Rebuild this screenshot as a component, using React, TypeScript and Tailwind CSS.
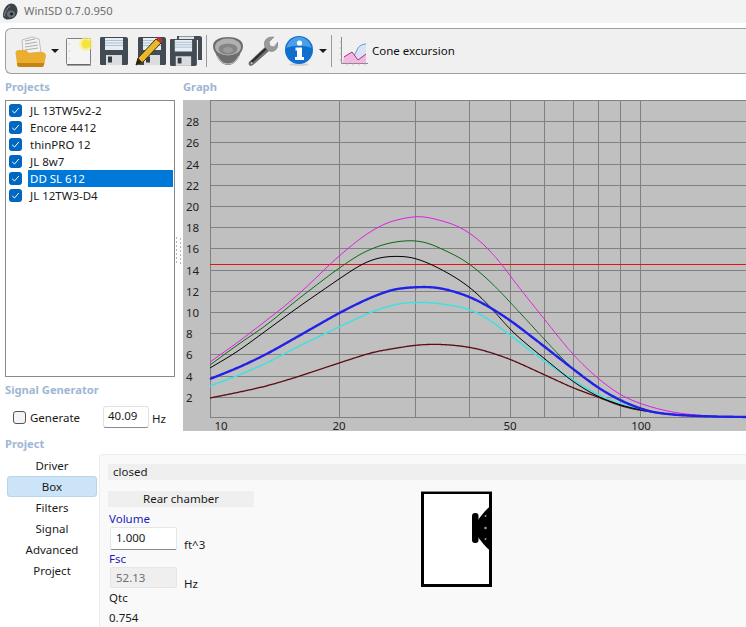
const font = "font-['Noto_Sans',sans-serif]"

const projects = ["JL 13TW5v2-2", "Encore 4412", "thinPRO 12", "JL 8w7", "DD SL 612", "JL 12TW3-D4"]
const navItems = ["Driver", "Box", "Filters", "Signal", "Advanced", "Project"]

// curve samples read off the plot, in picture coordinates (svg starts at 183,100)
type Pt = [number, number]
const tail: Pt[] = [[650, 412], [676, 415], [711, 416.5], [746, 417]]
const curves: { color: string; width: number; pts: Pt[] }[] = [
  {
    color: "#5c0a14",
    width: 1.3,
    pts: [[210, 398], [240, 392], [267, 386], [297, 377], [339, 363], [373, 352], [415, 345], [437, 344], [463, 346], [483, 350], [510, 359], [545, 375], [573, 388], [598, 397], [623, 407], ...tail]
  },
  {
    color: "#40e0e0",
    width: 1.5,
    pts: [[210, 386], [237, 376], [267, 363], [297, 347], [339, 327], [373, 311], [400, 303], [427, 302], [463, 307], [483, 315], [510, 335], [545, 362], [573, 380], [598, 395], [620, 404], ...tail]
  },
  {
    color: "#e020e0",
    width: 1,
    pts: [[210, 362], [237, 343], [263, 323], [290, 302], [314, 280], [330, 264], [339, 256], [363, 236], [387, 222], [415, 216], [423, 216], [447, 222], [463, 228], [483, 243], [502, 264], [513, 280], [545, 320], [573, 355], [598, 379], [623, 397], [650, 407], [676, 413], [711, 416.5], [746, 417]]
  },
  {
    color: "#0a6a14",
    width: 1,
    pts: [[210, 365], [240, 343], [267, 325], [293, 303], [327, 277], [339, 268], [363, 252], [387, 243], [410, 240], [427, 242], [463, 259], [471, 265], [489, 280], [510, 302], [545, 340], [573, 370], [598, 388], [623, 402], ...tail]
  },
  {
    color: "#000000",
    width: 1,
    pts: [[210, 368], [237, 352], [267, 330], [297, 308], [339, 279], [363, 263], [380, 257], [397, 256], [413, 257], [433, 265], [457, 278], [476, 292], [496, 313], [510, 330], [530, 347], [545, 359], [573, 382], [598, 397], [623, 406], ...tail]
  },
  {
    color: "#2222e6",
    width: 2.4,
    pts: [[210, 379], [240, 367], [267, 354], [297, 337], [339, 313], [367, 299], [393, 289], [415, 287], [437, 287], [463, 294], [483, 303], [510, 320], [545, 347], [573, 369], [598, 388], [623, 402], ...tail]
  }
]

// sample every pixel, then run a moving average twice to take the lumps out of the hand read points
const smooth = (pts: Pt[]) => {
  const at = (x: number) => {
    if (x <= pts[0][0]) {
      const [a, b] = pts
      return a[1] + ((x - a[0]) * (b[1] - a[1])) / (b[0] - a[0])
    }
    if (x >= pts[pts.length - 1][0]) return pts[pts.length - 1][1]
    const i = pts.findIndex((p) => p[0] >= x)
    const [a, b] = [pts[i - 1], pts[i]]
    return a[1] + ((x - a[0]) * (b[1] - a[1])) / (b[0] - a[0])
  }
  const pad = 40
  let ys: number[] = []
  for (let x = 210 - pad; x <= 746 + pad; x++) ys.push(at(x))
  for (let pass = 0; pass < 2; pass++) {
    ys = ys.map((_, i) => {
      const r = 9
      let sum = 0
      let n = 0
      for (let j = Math.max(i - r, 0); j <= Math.min(i + r, ys.length - 1); j++) {
        sum += ys[j]
        n++
      }
      return sum / n
    })
  }
  let d = ""
  for (let x = 210; x <= 746; x++) {
    d += `${x === 210 ? "M" : "L"}${x - 183} ${(ys[x - 210 + pad] - 100).toFixed(2)} `
  }
  return d
}

const Graph = () => {
  const vLines = [210.5, 339.5, 415.5, 469.5, 510.5, 544.5, 573.5, 598.5, 620.5, 640.5]
  const hLines: [number, string][] = [
    [121.5, "28"], [142.5, "26"], [164.5, "24"], [185.5, "22"], [206.5, "20"], [227.5, "18"], [248.5, "16"],
    [270.5, "14"], [291.5, "12"], [312.5, "10"], [333.5, "8"], [354.5, "6"], [376.5, "4"], [397.5, "2"]
  ]
  const xLabels: [number, string][] = [[221, "10"], [339, "20"], [510, "50"], [641, "100"]]
  return (
    <svg width="563" height="335" viewBox="0 0 563 335" className="block shrink-0">
      <rect x="0" y="0" width="563" height="331" fill="#c0c0c0" />
      <line x1="27.5" x2="563" y1="0.5" y2="0.5" stroke="#808080" />
      {hLines.map(([y]) => (
        <line key={y} x1="27" x2="563" y1={y - 100} y2={y - 100} stroke="#808080" />
      ))}
      {vLines.map((x) => (
        <line key={x} x1={x - 183} x2={x - 183} y1="0" y2="317.5" stroke="#808080" />
      ))}
      <line x1="27" x2="563" y1="317.5" y2="317.5" stroke="#808080" />
      <line x1="27" x2="563" y1="164.5" y2="164.5" stroke="#e81010" />
      {curves.map((c) => (
        <path key={c.color} d={smooth(c.pts)} fill="none" stroke={c.color} strokeWidth={c.width} />
      ))}
      {hLines.map(([y, label]) => (
        <text key={label} x="3" y={y - 96} fontSize="11.5" fontFamily="Noto Sans" fill="#222">
          {label}
        </text>
      ))}
      {xLabels.map(([x, label]) => (
        <text key={label} x={x - 183} y="330" textAnchor="middle" fontSize="11.5" fontFamily="Noto Sans" fill="#222">
          {label}
        </text>
      ))}
    </svg>
  )
}

const SpeakerLogo = () => (
  <svg width="16" height="17" viewBox="0 0 16 17" className="ml-[2px]">
    <path d="M9 0.5 C13 0.5 15.5 4 15.5 8 C15.5 13 11 16.5 6 16.5 C2 16.5 0.5 14 1 11 C1.5 7 4 1 9 0.5Z" fill="#3c434a" />
    <ellipse cx="9" cy="11" rx="4" ry="3.5" fill="#69717a" />
    <ellipse cx="9.5" cy="11" rx="1.6" ry="1.4" fill="#1b1f24" />
    <path d="M2 13 C3 9 5 5 8 3" stroke="#868d94" strokeWidth="1" fill="none" />
  </svg>
)

const Folder = () => (
  <svg width="32" height="31" viewBox="0 0 32 31" className="block">
    <path d="M7 4 L17 1 L24 3 L26 16 L8 18Z" fill="#f2f2f2" stroke="#a9a9a9" strokeWidth="0.7" />
    <path d="M10 5 L20 3 M10 8 L22 6 M10 11 L23 9 M10 14 L23 12" stroke="#9a9a9a" strokeWidth="0.8" />
    <path d="M0.5 17 C0.5 15 2 14 4 14 L11 14 L14 17 L27 16 C29 16 31 18 31 20 L29 29 C29 30 28 31 26 31 L5 31 C3 31 2 30 2 28Z" fill="#ecae30" />
    <path d="M2 27 L29.3 27 L28.5 30 C28 31 27 31 26 31 L5 31 C3 31 2 30 2 27Z" fill="#c58412" />
  </svg>
)

const Arrow = () => (
  <svg width="8" height="4" viewBox="0 0 8 4" className="block">
    <path d="M0 0 H8 L4 4Z" fill="#1a1a1a" />
  </svg>
)

const NewPage = () => (
  <svg width="27" height="29" viewBox="0 0 27 29" className="block">
    <rect x="0.5" y="1.5" width="24" height="26" rx="1" fill="#f4f4f4" stroke="#7f7f7f" />
    <path d="M1 28 H25" stroke="#555" strokeWidth="1" />
    <circle cx="3.5" cy="7" r="0.6" fill="#aaa" />
    <circle cx="3.5" cy="14" r="0.6" fill="#aaa" />
    <circle cx="3.5" cy="21" r="0.6" fill="#aaa" />
    <circle cx="20" cy="7" r="7" fill="#f7ef8c" opacity="0.7" />
    <circle cx="20" cy="7" r="4.5" fill="#f5e43a" />
  </svg>
)

const FloppyShape = () => (
  <>
    <path d="M1.5 0 H26 C27 0 28 1 28 2 V26.5 C28 27.5 27 28 26 28 H1.5 C0.5 28 0 27.5 0 26.5 V1.5 C0 0.5 0.5 0 1.5 0Z" fill="#424b54" />
    <rect x="5" y="1" width="18" height="12" fill="#e6edf3" />
    <path d="M5 3.5 H23 M5 6 H23 M5 8.5 H23" stroke="#9fb6cc" strokeWidth="0.8" />
    <rect x="6" y="18" width="16" height="10" fill="#d9dde0" />
    <rect x="8" y="19.5" width="4" height="6" fill="#353c44" />
  </>
)

const Floppy = () => (
  <svg width="28" height="28" viewBox="0 0 28 28" className="block">
    <FloppyShape />
  </svg>
)

const FloppyPencil = () => (
  <svg width="31" height="30" viewBox="0 0 31 30" className="block">
    <g transform="translate(3 1)">
      <FloppyShape />
    </g>
    <path d="M1 29 L3 22 L21 3 L26 7 L8 26Z" fill="#e8b92c" stroke="#3a2c05" strokeWidth="1" />
    <path d="M21 3 L23.5 1 C24.5 0.5 27 3 27.5 5 L26 7Z" fill="#c8322e" />
    <path d="M1 29 L3 22 L7 26Z" fill="#2a2209" />
  </svg>
)

const Floppies = () => (
  <svg width="32" height="30" viewBox="0 0 32 30" className="block">
    <path d="M7 0 H30 C31 0 32 1 32 2 V24 H28 V4 H7Z" fill="#424b54" />
    <rect x="9" y="0.5" width="15" height="3.5" fill="#dfe6ec" />
    <g transform="translate(0 3) scale(0.96)">
      <FloppyShape />
    </g>
  </svg>
)

const Bowl = () => (
  <svg width="32" height="30" viewBox="0 0 32 30" className="block">
    <path d="M1 10 C1 4 8 1 16 1 C24 1 31 4 31 10 C31 14 29 16 28 18 C26 25 21 29 16 29 C11 29 6 25 4 18 C3 16 1 14 1 10Z" fill="#6d6d6d" />
    <ellipse cx="16" cy="11" rx="13" ry="8.5" fill="#b0b0b0" />
    <ellipse cx="16" cy="13" rx="9.5" ry="5.5" fill="#858585" />
    <ellipse cx="16" cy="14" rx="5" ry="3" fill="#9b9b9b" />
    <path d="M5 20 C8 26 12 28 16 28 C20 28 24 26 27 20" stroke="#c0c0c0" strokeWidth="1.2" fill="none" />
  </svg>
)

const Wrench = () => (
  <svg width="30" height="31" viewBox="0 0 30 31" className="block">
    <path d="M3 30 C1 30 0 28 1 26 L17 11 L21 15 L5 29Z" fill="#6f6f6f" />
    <path d="M1.5 26.5 L17 12 L18.5 13.5 L3 28Z" fill="#2c2c2c" />
    <path d="M17 11 C15 6 18 1 24 1 L26 1 L21 6 L22 10 L26 11 L30 6 C30.5 12 27 17 21 15Z" fill="#9a9a9a" stroke="#6e6e6e" strokeWidth="0.5" />
    <circle cx="3.5" cy="27" r="1.1" fill="#d0d0d0" />
  </svg>
)

const Info = () => (
  <svg width="28" height="30" viewBox="0 0 28 30" className="block">
    <ellipse cx="14" cy="28.5" rx="10" ry="1.5" fill="#cfcfcf" />
    <circle cx="14" cy="14" r="14" fill="#0f6fce" />
    <path d="M1.5 12 C3 5 8 1 14 1 C20 1 25 5 26.5 12 C20 9 8 9 1.5 12Z" fill="#4d9ee8" />
    <circle cx="14.5" cy="7" r="2.6" fill="#fff" />
    <path d="M10.5 11.5 H17 V21 H19 V24 H10 V21 H12 V14.5 H10.5Z" fill="#fff" />
  </svg>
)

const ChartIcon = () => (
  <svg width="29" height="30" viewBox="0 0 29 30" className="block">
    <path d="M2.5 1 V27.5 H29" stroke="#8a8a8a" strokeWidth="1" fill="none" />
    <path d="M0.5 6 H2.5 M0.5 12 H2.5 M0.5 18 H2.5 M0.5 24 H2.5 M8 27.5 V29.5 M14 27.5 V29.5 M20 27.5 V29.5 M26 27.5 V29.5" stroke="#b0b0b0" strokeWidth="0.8" />
    <path d="M15 20 L19 12 C21 9 24 8 27 8 V23 L21 25Z" fill="#d6e4f6" />
    <path d="M15 20 L19 12 C21 9 24 8 27 8" stroke="#6a94cf" strokeWidth="1" fill="none" />
    <path d="M4 25 L5 21 L13 16 L19 24 L27 18 V27 H4Z" fill="#f4b6e2" />
    <path d="M5 21 L13 16 L19 24 L27 18" stroke="#b52c7f" strokeWidth="1" fill="none" />
  </svg>
)

const Sep = ({ ml }: { ml: string }) => <div className={`${ml} w-px h-[32px] bg-[#9a9a9a]`} />

const Check = () => (
  <div className="w-[13px] h-[13px] rounded-[3px] bg-[#0067c0] flex items-center justify-center shrink-0">
    <svg width="9" height="9" viewBox="0 0 9 9">
      <path d="M1.2 4.8 L3.5 7 L7.8 2" stroke="#fff" strokeWidth="1" fill="none" />
    </svg>
  </div>
)

const SplitterDots = () => (
  <svg width="7" height="28" viewBox="0 0 7 28" className="block">
    {[0, 4, 8, 12, 16, 20, 24].map((y) => (
      <g key={y} fill="#b4b4b4">
        <rect x="1" y={y} width="1" height="2" />
        <rect x="5" y={y + 1} width="1" height="2" />
      </g>
    ))}
  </svg>
)

const Heading = ({ children }: { children: string }) => (
  <div className="text-[11.2px] leading-[16px] font-bold text-[#9db7d4]">{children}</div>
)

export default function App() {
  return (
    <div className={`${font} w-[746px] h-[627px] overflow-hidden bg-white text-[11.5px] text-[#1a1a1a] flex flex-col`}>
      {/* title bar */}
      <div className="h-[23px] bg-[#f3f3f3] flex items-center">
        <SpeakerLogo />
        <span className="ml-[6px] text-[#6e6e6e] text-[11.2px]">WinISD 0.7.0.950</span>
      </div>

      {/* toolbar */}
      <div className="mt-[5px] ml-[5px] h-[46px] flex items-center bg-[#f0f0f0] border border-r-0 border-[#a0a0a0] rounded-l-[6px]">
        <div className="ml-[9px]"><Folder /></div>
        <div className="ml-[4px]"><Arrow /></div>
        <div className="ml-[7px]"><NewPage /></div>
        <div className="ml-[7px]"><Floppy /></div>
        <div className="ml-[7px]"><FloppyPencil /></div>
        <div className="ml-[4px]"><Floppies /></div>
        <Sep ml="ml-[4px]" />
        <div className="ml-[5px]"><Bowl /></div>
        <div className="ml-[4px]"><Wrench /></div>
        <div className="ml-[7px]"><Info /></div>
        <div className="ml-[6px]"><Arrow /></div>
        <Sep ml="ml-[4px]" />
        <div className="ml-[7px]"><ChartIcon /></div>
        <span className="ml-[4px] text-[#111]">Cone excursion</span>
      </div>

      {/* projects + graph */}
      <div className="flex h-[357px]">
        <div className="w-[175px] shrink-0 pl-[5px] flex flex-col">
          <div className="mt-[5px] h-[21px]"><Heading>Projects</Heading></div>
          <div className="w-[170px] h-[277px] border border-[#8a8a8a] pt-[1px] pl-[3px] pr-[1px]">
            {projects.map((p) => {
              const selected = p === "DD SL 612"
              return (
                <div key={p} className="h-[17px] flex items-center">
                  <Check />
                  <span className={`ml-[6px] flex-1 h-[17px] pl-[2px] leading-[17px] ${selected ? "bg-[#0078d7] text-white" : ""}`}>
                    {p}
                  </span>
                </div>
              )
            })}
          </div>
          <div className="mt-[5px]"><Heading>Signal Generator</Heading></div>
          <div className="mt-[8px] ml-[8px] flex items-center h-[22px]">
            <div className="w-[13px] h-[13px] rounded-[3px] border border-[#555] bg-[#f4f4f4]" />
            <span className="ml-[4px] w-[73px] mt-[2px]">Generate</span>
            <div className="w-[46px] h-[22px] bg-white border border-[#e2e2e2] border-b-[#8a8a8a] rounded-[3px] pl-[4px] leading-[18px]">40.09</div>
            <span className="ml-[3px] mt-[3px]">Hz</span>
          </div>
        </div>
        <div className="w-[8px] shrink-0 pt-[163px]"><SplitterDots /></div>
        <div className="flex-1 min-w-0 flex flex-col">
          <div className="mt-[5px] h-[21px] shrink-0"><Heading>Graph</Heading></div>
          <Graph />
        </div>
      </div>

      {/* project section */}
      <div className="pl-[5px] h-[16px] mt-[5px]"><Heading>Project</Heading></div>
      <div className="flex flex-1 mt-[2px] min-h-0">
        <div className="w-[99px] shrink-0 pl-[7px] pr-[2px] pt-[1px]">
          {navItems.map((n) => (
            <div
              key={n}
              className={`h-[21px] leading-[20px] text-center ${
                n === "Box" ? "bg-[#cce4f7] border border-[#b5d6ef] rounded-[3px]" : "border border-transparent"
              }`}
            >
              {n}
            </div>
          ))}
        </div>
        <div className="flex-1 bg-[#f9f9f9] border-l border-t border-[#ececec] rounded-tl-[4px] pl-[8px] pt-[9px]">
          <div className="h-[16px] bg-[#efefef] pl-[5px] leading-[15px]">closed</div>
          <div className="flex">
            <div className="w-[146px] shrink-0">
              <div className="mt-[11px] h-[16px] bg-[#efefef] text-center leading-[16px]">Rear chamber</div>
              <div className="mt-[3px] pl-[1px] h-[17px] leading-[17px] text-[#1a1ac0]">Volume</div>
              <div className="flex h-[23px] pl-[2px]">
                <div className="w-[67px] h-[23px] bg-white border border-[#e6e6e6] border-b-[#8a8a8a] rounded-[2px] pl-[5px] leading-[19px]">1.000</div>
                <span className="ml-[7px] mt-[9px]">ft^3</span>
              </div>
              <div className="pl-[1px] h-[17px] leading-[17px] text-[#1a1ac0]">Fsc</div>
              <div className="flex h-[21px] pl-[2px]">
                <div className="w-[67px] h-[21px] bg-[#efefef] border border-[#e6e6e6] rounded-[2px] pl-[5px] leading-[19px] text-[#6e6e6e]">52.13</div>
                <span className="ml-[7px] mt-[8px]">Hz</span>
              </div>
              <div className="pl-[1px] h-[19px] leading-[19px]">Qtc</div>
              <div className="pl-[1px] mt-[1px] h-[19px] leading-[19px]">0.754</div>
            </div>
            <svg width="71" height="97" viewBox="0 0 71 97" className="ml-[167px] mt-[11px]">
              <rect x="1.5" y="1.5" width="68" height="93" fill="#fff" stroke="#000" strokeWidth="3" />
              <path d="M0 0.5 H71" stroke="#888" strokeWidth="1" />
              <rect x="51" y="22" width="6.5" height="30" rx="3" fill="#000" />
              <path d="M70 15 C66 17 60 25 57 29 V46 C60 50 66 58 70 60Z" fill="#000" />
              <circle cx="64.5" cy="25" r="1" fill="#999" />
              <circle cx="64.5" cy="37" r="1.2" fill="#aaa" />
              <circle cx="64.5" cy="48" r="1" fill="#999" />
            </svg>
          </div>
        </div>
      </div>
    </div>
  )
}
